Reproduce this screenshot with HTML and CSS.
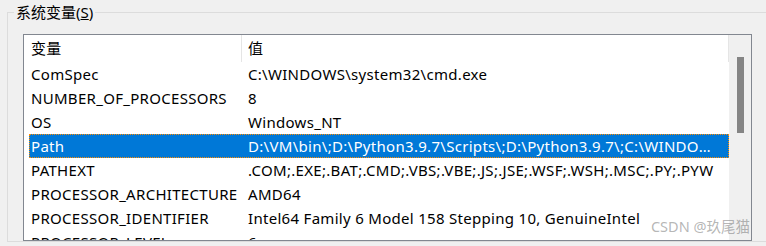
FILE: index.html
```html
<!DOCTYPE html>
<html lang="zh-CN">
<head>
    <meta charset="UTF-8">
    <title>系统变量</title>
    <link rel="stylesheet" href="styles.css">
</head>
<body>
    <fieldset class="group">
        <legend class="group-title">系统变量(<u>S</u>)</legend>
        <div class="listbox">
            <div class="list-area">
                <div class="list-head">
                    <div class="head-cell name">变量</div>
                    <div class="head-cell">值</div>
                </div>
                <div class="list-body">
                    <div class="row"><div class="cell name">ComSpec</div><div class="cell">C:\WINDOWS\system32\cmd.exe</div></div>
                    <div class="row"><div class="cell name">NUMBER_OF_PROCESSORS</div><div class="cell">8</div></div>
                    <div class="row"><div class="cell name">OS</div><div class="cell">Windows_NT</div></div>
                    <div class="row selected"><div class="cell name">Path</div><div class="cell">D:\VM\bin\;D:\Python3.9.7\Scripts\;D:\Python3.9.7\;C:\WINDOWS\system32;C:\WINDOWS;C:\WINDOWS\System32\Wbem</div></div>
                    <div class="row"><div class="cell name">PATHEXT</div><div class="cell">.COM;.EXE;.BAT;.CMD;.VBS;.VBE;.JS;.JSE;.WSF;.WSH;.MSC;.PY;.PYW</div></div>
                    <div class="row"><div class="cell name">PROCESSOR_ARCHITECTURE</div><div class="cell">AMD64</div></div>
                    <div class="row"><div class="cell name">PROCESSOR_IDENTIFIER</div><div class="cell">Intel64 Family 6 Model 158 Stepping 10, GenuineIntel</div></div>
                    <div class="row"><div class="cell name">PROCESSOR_LEVEL</div><div class="cell">6</div></div>
                </div>
            </div>
            <div class="scrollbar">
                <div class="thumb"></div>
            </div>
        </div>
    </fieldset>
    <div class="watermark">CSDN @玖尾猫</div>
</body>
</html>
```

FILE: styles.css
```css
body {
    margin: 0;
    background: #f0f0f0;
    font-family: "Noto Sans", "Noto Sans CJK SC", sans-serif;
    font-size: 15px;
    letter-spacing: 0.3px;
    color: #000;
    overflow: hidden;
    position: relative;
    height: 246px;
}

.group {
    margin: 2px 0 0 7px;
    padding: 0;
    width: 800px;
    border: 1px solid #dcdcdc;
    border-right: none;
}

.group-title {
    margin-left: 6px;
    padding: 0 2px;
    line-height: 20px;
    letter-spacing: 0;
}

.listbox {
    display: flex;
    margin: 12px 0 0 15px;
    width: 727px;
    height: 205px;
    border: 1px solid #828790;
    background: #fff;
}

.list-area {
    flex: 1;
    min-width: 0;
    overflow: hidden;
}

.list-head {
    display: flex;
    height: 27px;
    line-height: 27px;
    border-right: 1px solid #e5e5e5;
}

.head-cell {
    padding-left: 6px;
}

.head-cell.name {
    width: 210px;
    padding-left: 7px;
    border-right: 1px solid #e5e5e5;
}

.row {
    display: flex;
    margin-left: 5px;
    height: 24px;
    line-height: 24px;
    white-space: nowrap;
}

.cell {
    flex: 1;
    min-width: 0;
    padding: 0 10px 0 7px;
    overflow: hidden;
    text-overflow: ellipsis;
}

.cell.name {
    flex: none;
    width: 210px;
    padding: 0 0 0 2px;
}

.row.selected {
    background: #0078d7;
    color: #fff;
    outline: 1px dotted #ff8c00;
    outline-offset: -1px;
}

.scrollbar {
    width: 22px;
    padding-top: 22px;
    background: #f0f0f0;
}

.thumb {
    width: 7px;
    height: 76px;
    margin-left: 8px;
    background: #858585;
}

.watermark {
    position: absolute;
    right: 16px;
    bottom: 10px;
    font-size: 14.5px;
    letter-spacing: 0;
    color: rgba(120, 120, 120, 0.55);
}
```
